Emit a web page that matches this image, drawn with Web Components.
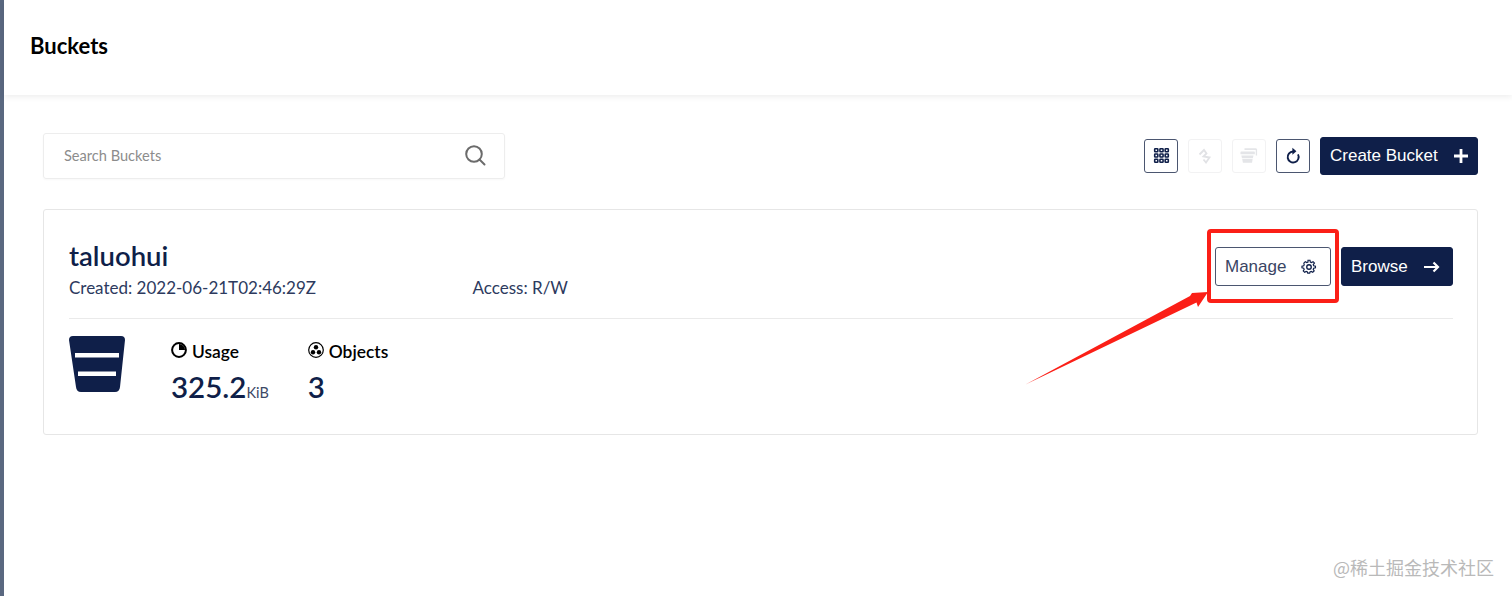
<!DOCTYPE html>
<html lang="en">
    <head>
        <meta charset="UTF-8" />
        <title>Buckets</title>
        <style>
            html, body { margin: 0; height: 100%; background: #fff; }
            body { font-family: Lato, "Liberation Sans", sans-serif; overflow: hidden; }
        </style>
    </head>
    <body>
        <app-shell>
            <page-header>Buckets</page-header>
            <bucket-toolbar></bucket-toolbar>
            <bucket-card name="taluohui" created="2022-06-21T02:46:29Z" access="R/W"></bucket-card>
        </app-shell>
        <note-overlay></note-overlay>

        <script type="module">
            const gridCells = [1.6, 6.6, 11.6]
                .flatMap((y) => [1.6, 6.6, 11.6].map((x) => `<rect x="${x}" y="${y}" width="3" height="3" rx=".6"/>`))
                .join('');

            const icons = {
                grid: `<svg width="17" height="17" viewBox="0 0 16.200 16.200" fill="#fff" stroke="#0f1f49" stroke-width="1.500">${gridCells}</svg>`,
                lifecycle: '<svg width="16" height="18" viewBox="0 0 16 18" fill="none" stroke="#e1e2e5" stroke-width="1.800"><path d="M2.500 7.500 7 3l2.500 3.500L6.500 9.500 12.500 10.500 9 15.500 6.500 12.500"/></svg>',
                replicate: '<svg width="18" height="17" viewBox="0 0 20 17" fill="#e4e5e8"><path d="M5 .5h13l1 1v7h-1.500V2.500H5zM1 4h15l.5 1v2h-16V5zM1.500 8.500H15l-.7 3H2.200zM2.500 12.500H14l-.6 4H3.200z"/></svg>',
                refresh: '<svg width="16" height="18" viewBox="0 0 16 18" fill="none" stroke="#0f1f49" stroke-width="1.900"><path d="M8 4.500A5.500 5.500 0 1 0 13 7.400"/><path d="M7.400 .8 11.400 4.300 7.400 7.800z" fill="#0f1f49" stroke="none"/></svg>',
                plus: '<svg width="16" height="16" viewBox="0 0 16 16" stroke="#fff" stroke-width="2.800"><path d="M8 1v14M1 8h14"/></svg>',
                arrow: '<svg width="16" height="12" viewBox="0 0 16 12" fill="none" stroke="#fff" stroke-width="2.200"><path d="M0 6h14M9.500 1.500 14 6l-4.500 4.500"/></svg>',
                gear: '<svg width="16" height="16" viewBox="0 0 24 24" fill="none" stroke="#0f1f49" stroke-width="2"><circle cx="12" cy="12" r="3.400"/><path d="M10.300 2h3.400l.5 3 2.100 1 2.600-1.600 2.400 2.400L19.200 9.400l.8 2 3 .6v3l-3 .6-.8 2 1.600 2.600-2.400 2.400-2.600-1.600-2.100.9-.5 2.100h-3.400l-.5-2.100-2.100-.9-2.600 1.600-2.400-2.400 1.600-2.600-.8-2-3-.6v-3l3-.6.8-2L3.200 6.800l2.400-2.400 2.600 1.600 2.100-1z" transform="translate(12 12) scale(.88) translate(-12 -13.500)"/></svg>',
                usage: '<svg width="16" height="16" viewBox="0 0 16 16"><circle cx="8" cy="8" r="6.900" fill="none" stroke="#000" stroke-width="2"/><path d="M8 2A6 6 0 0 1 14 8H8z"/></svg>',
                objects: '<svg width="16" height="16" viewBox="0 0 16 16"><circle cx="8" cy="8" r="7.300" fill="none" stroke="#000" stroke-width="1.200"/><circle cx="8" cy="5.200" r="2.200"/><circle cx="5" cy="10.200" r="2.200"/><circle cx="11" cy="10.200" r="2.200"/></svg>',
                search: '<svg width="22" height="22" viewBox="0 0 22 22" fill="none" stroke="#6b6b6b" stroke-width="2"><circle cx="10" cy="10" r="7.800"/><path d="m15.500 15.500 5 5" stroke-linecap="round"/></svg>'
            };

            class AppShell extends HTMLElement {
                constructor() {
                    super();
                    this.attachShadow({ mode: 'open' });
                    this.shadowRoot.innerHTML = `
                        <style>
                            :host { display: flex; height: 596px; }
                            .side { width: 4px; background: #5a6880; flex: none; }
                            .main { flex: 1; min-width: 0; display: flex; flex-direction: column; }
                        </style>
                        <div class="side"></div>
                        <div class="main"><slot></slot></div>
                    `;
                }
            }

            class PageHeader extends HTMLElement {
                constructor() {
                    super();
                    this.attachShadow({ mode: 'open' });
                    this.shadowRoot.innerHTML = `
                        <style>
                            :host {
                                display: flex;
                                align-items: center;
                                box-sizing: border-box;
                                height: 95px;
                                padding: 0 26px 4px;
                                font-size: 22px;
                                font-weight: 700;
                                color: #000;
                                box-shadow: 0 2px 6px rgba(0, 0, 0, .07);
                            }
                        </style>
                        <slot></slot>
                    `;
                }
            }

            class IconButton extends HTMLElement {
                constructor() {
                    super();
                    this.attachShadow({ mode: 'open' });
                    const off = this.hasAttribute('disabled');
                    this.shadowRoot.innerHTML = `
                        <style>
                            :host {
                                display: flex;
                                align-items: center;
                                justify-content: center;
                                box-sizing: border-box;
                                width: 34px;
                                height: 34px;
                                margin-bottom: 1px;
                                border-radius: 3px;
                                border: 1px solid ${off ? '#f2f2f3' : '#4b5670'};
                            }
                            svg { display: block; }
                        </style>
                        ${icons[this.getAttribute('icon')]}
                    `;
                }
            }

            class ActionButton extends HTMLElement {
                constructor() {
                    super();
                    this.attachShadow({ mode: 'open' });
                    const outline = this.hasAttribute('outline');
                    this.shadowRoot.innerHTML = `
                        <style>
                            :host {
                                display: flex;
                                align-items: center;
                                justify-content: space-between;
                                box-sizing: border-box;
                                height: ${this.getAttribute('h') || 39}px;
                                width: ${this.getAttribute('w')}px;
                                padding: 0 ${this.getAttribute('pad') || 10}px 0 9px;
                                border-radius: 3px;
                                font: 17px "Liberation Sans", Arial, sans-serif;
                                color: ${outline ? '#3a4564' : '#fff'};
                                background: ${outline ? '#fff' : '#0f1f49'};
                                border: 1px solid ${outline ? '#4b5670' : '#0f1f49'};
                            }
                            svg { display: block; }
                        </style>
                        <slot></slot>
                        ${icons[this.getAttribute('icon')]}
                    `;
                }
            }

            class SearchBox extends HTMLElement {
                constructor() {
                    super();
                    this.attachShadow({ mode: 'open' });
                    this.shadowRoot.innerHTML = `
                        <style>
                            :host {
                                display: flex;
                                align-items: center;
                                justify-content: space-between;
                                box-sizing: border-box;
                                width: 462px;
                                height: 46px;
                                padding: 0 18px 2px 20px;
                                border: 1px solid #ededed;
                                border-radius: 3px;
                                box-shadow: 0 1px 2px rgba(0, 0, 0, .03);
                                font-size: 14.600px;
                                color: #8c8c8c;
                            }
                        </style>
                        <span>Search Buckets</span>
                        ${icons.search}
                    `;
                }
            }

            class BucketToolbar extends HTMLElement {
                constructor() {
                    super();
                    this.attachShadow({ mode: 'open' });
                    this.shadowRoot.innerHTML = `
                        <style>
                            :host {
                                display: flex;
                                align-items: center;
                                justify-content: space-between;
                                padding: 38px 34px 30px 39px;
                            }
                            .acts { display: flex; align-items: center; gap: 10px; }
                        </style>
                        <search-box></search-box>
                        <div class="acts">
                            <icon-button icon="grid"></icon-button>
                            <icon-button icon="lifecycle" disabled></icon-button>
                            <icon-button icon="replicate" disabled></icon-button>
                            <icon-button icon="refresh"></icon-button>
                            <action-button icon="plus" w="158" h="38" pad="8">Create Bucket</action-button>
                        </div>
                    `;
                }
            }

            class StatItem extends HTMLElement {
                constructor() {
                    super();
                    this.attachShadow({ mode: 'open' });
                    const unit = this.getAttribute('unit');
                    this.shadowRoot.innerHTML = `
                        <style>
                            :host { display: block; padding-top: 5px; }
                            .label {
                                display: flex;
                                align-items: center;
                                gap: 5px;
                                height: 20px;
                                font-size: 17.400px;
                                font-weight: 600;
                                color: #000;
                            }
                            svg { display: block; margin-top: -3px; }
                            .val {
                                margin-top: 8px;
                                font-size: 29.500px;
                                line-height: 36px;
                                font-weight: 600;
                                color: #0f1f49;
                            }
                            small { font-size: 14.500px; font-weight: 400; color: #3c4866; }
                        </style>
                        <div class="label">${icons[this.getAttribute('icon')]}<slot>${this.getAttribute('label')}</slot></div>
                        <div class="val">${this.getAttribute('value')}${unit ? `<small>${unit}</small>` : ''}</div>
                    `;
                }
            }

            class BucketCard extends HTMLElement {
                constructor() {
                    super();
                    this.attachShadow({ mode: 'open' });
                    this.shadowRoot.innerHTML = `
                        <style>
                            :host {
                                display: block;
                                box-sizing: border-box;
                                width: 1435px;
                                height: 226px;
                                margin-left: 39px;
                                padding: 25px 24px 0 25px;
                                border: 1px solid #e6e6e6;
                                border-radius: 3px;
                            }
                            .top {
                                display: flex;
                                justify-content: space-between;
                                height: 83px;
                                border-bottom: 1px solid #eaeaea;
                            }
                            h1 {
                                margin: 0;
                                padding-top: 1px;
                                font-size: 27.500px;
                                line-height: 40px;
                                font-weight: 600;
                                color: #0f1f49;
                            }
                            .meta {
                                display: grid;
                                grid-template-columns: 403.500px auto;
                                font-size: 17px;
                                line-height: 20px;
                                margin-top: 1.500px;
                                color: #2d3a5e;
                            }
                            .btns { display: flex; gap: 10px; padding-top: 12px; }
                            .bottom { display: flex; padding-top: 17px; }
                            .logo { display: block; width: 56px; height: 56px; margin-right: 46px; flex: none; }
                            stat-item + stat-item { margin-left: 39px; }
                        </style>
                        <div class="top">
                            <div>
                                <h1>${this.getAttribute('name')}</h1>
                                <div class="meta">
                                    <span>Created: ${this.getAttribute('created')}</span>
                                    <span>Access: ${this.getAttribute('access')}</span>
                                </div>
                            </div>
                            <div class="btns">
                                <action-button outline icon="gear" w="116" pad="13">Manage</action-button>
                                <action-button icon="arrow" w="112" pad="12">Browse</action-button>
                            </div>
                        </div>
                        <div class="bottom">
                            <svg class="logo" viewBox="0 0 56 56">
                                <path d="M4 0H52q4 0 4 4L51 51q-.5 5-5 5H12q-4.500 0-5-5L0 4Q0 0 4 0z" fill="#0f1f49"/>
                                <rect x="6" y="17" width="44" height="4.500" fill="#fff"/>
                                <rect x="9" y="35.500" width="38" height="4.500" fill="#fff"/>
                            </svg>
                            <stat-item icon="usage" label="Usage" value="325.2" unit="KiB"></stat-item>
                            <stat-item icon="objects" label="Objects" value="3"></stat-item>
                        </div>
                    `;
                }
            }

            // red marks drawn over the screenshot, and the site watermark
            class NoteOverlay extends HTMLElement {
                constructor() {
                    super();
                    this.attachShadow({ mode: 'open' });
                    this.shadowRoot.innerHTML = `
                        <style>
                            :host { position: absolute; inset: 0; pointer-events: none; }
                            .box {
                                position: absolute;
                                left: 1207px;
                                top: 229px;
                                width: 132px;
                                height: 74px;
                                box-sizing: border-box;
                                border: 4px solid #fb1f17;
                                border-radius: 4px;
                            }
                            svg { position: absolute; left: 0; top: 0; }
                            .mark {
                                position: absolute;
                                right: 18px;
                                top: 555px;
                                font: 18px "Noto Sans CJK SC", sans-serif;
                                line-height: 24px;
                                color: #b9b9b9;
                            }
                        </style>
                        <div class="box"></div>
                        <svg width="1512" height="596"><path d="M1025.500 384.500 1190 296 1192 293 1208 292 1198 307 1196.500 302.500z" fill="#fb1f17"/></svg>
                        <div class="mark">@稀土掘金技术社区</div>
                    `;
                }
            }

            customElements.define('app-shell', AppShell);
            customElements.define('page-header', PageHeader);
            customElements.define('icon-button', IconButton);
            customElements.define('action-button', ActionButton);
            customElements.define('search-box', SearchBox);
            customElements.define('bucket-toolbar', BucketToolbar);
            customElements.define('stat-item', StatItem);
            customElements.define('bucket-card', BucketCard);
            customElements.define('note-overlay', NoteOverlay);
        </script>
    </body>
</html>
